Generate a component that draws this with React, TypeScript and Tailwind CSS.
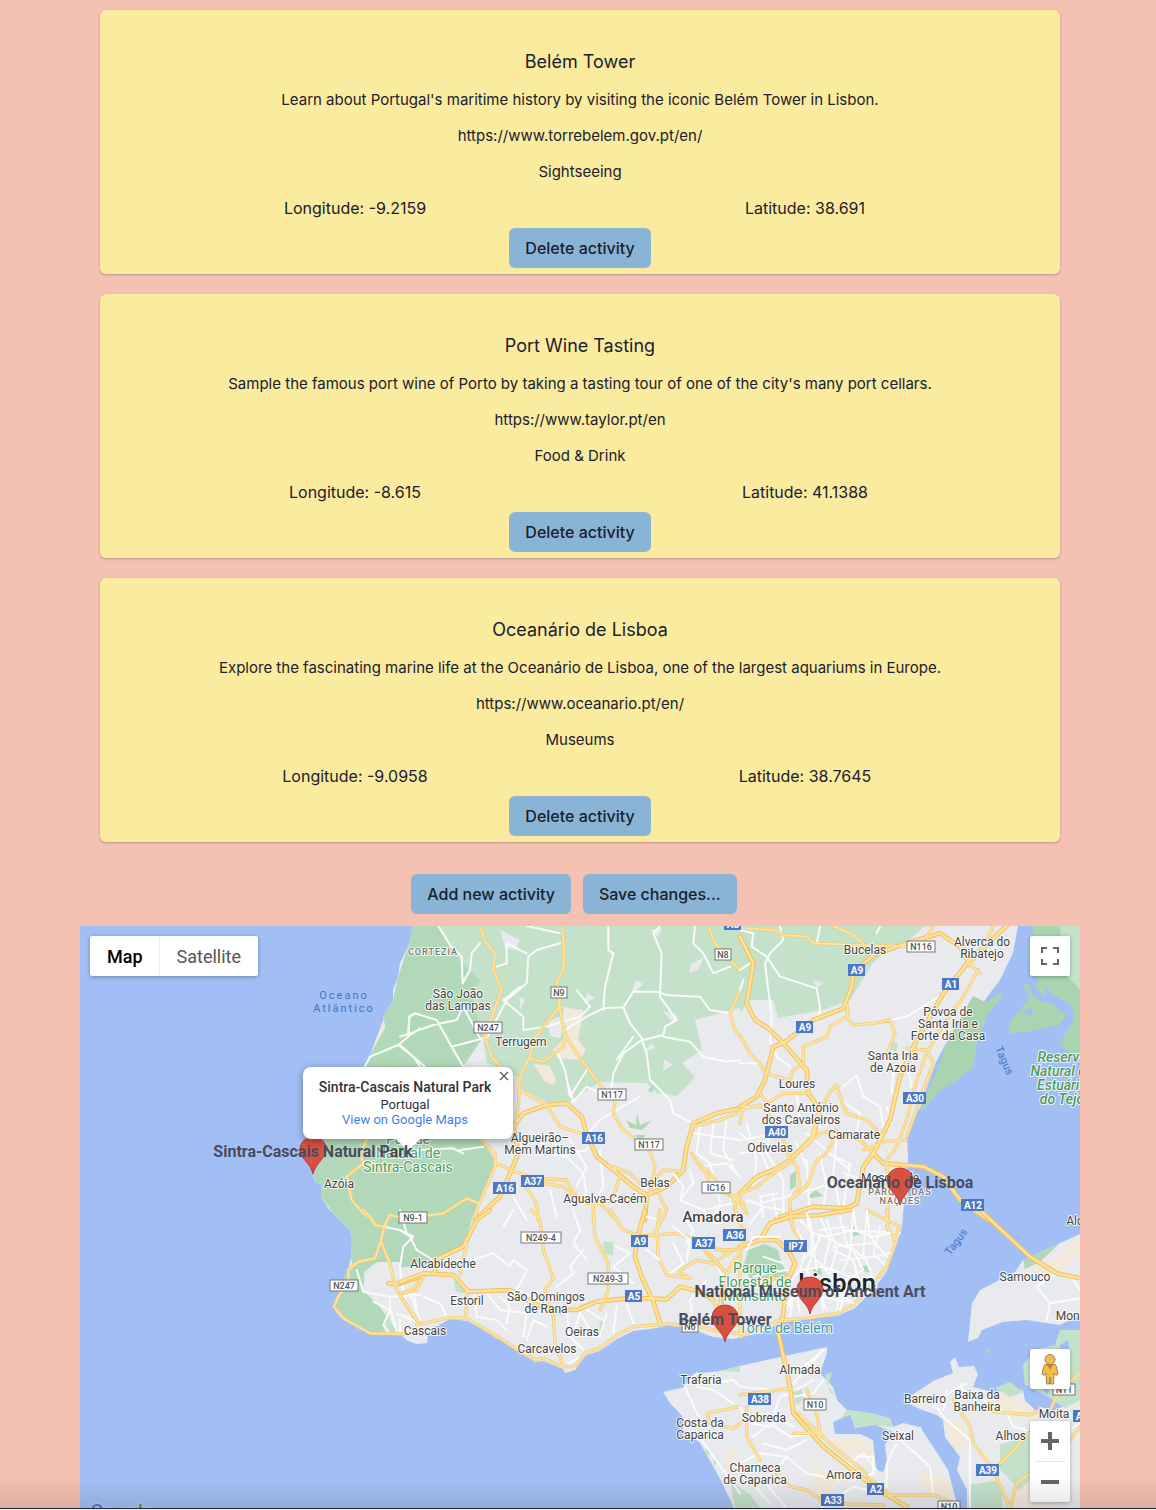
import React from "react";

type Activity = {
  name: string;
  description: string;
  url: string;
  category: string;
  longitude: string;
  latitude: string;
};

const activities: Activity[] = [
  {
    name: "Belém Tower",
    description: "Learn about Portugal's maritime history by visiting the iconic Belém Tower in Lisbon.",
    url: "https://www.torrebelem.gov.pt/en/",
    category: "Sightseeing",
    longitude: "-9.2159",
    latitude: "38.691",
  },
  {
    name: "Port Wine Tasting",
    description: "Sample the famous port wine of Porto by taking a tasting tour of one of the city's many port cellars.",
    url: "https://www.taylor.pt/en",
    category: "Food & Drink",
    longitude: "-8.615",
    latitude: "41.1388",
  },
  {
    name: "Oceanário de Lisboa",
    description: "Explore the fascinating marine life at the Oceanário de Lisboa, one of the largest aquariums in Europe.",
    url: "https://www.oceanario.pt/en/",
    category: "Museums",
    longitude: "-9.0958",
    latitude: "38.7645",
  },
];

function ActionButton({ children }: { children: React.ReactNode }) {
  return (
    <button type="button" className="h-10 rounded-md bg-[#8ab4d5] px-4 text-base font-medium text-[#1a202c]">
      {children}
    </button>
  );
}

function ActivityCard({ activity }: { activity: Activity }) {
  return (
    <article className="flex flex-col items-center rounded-md bg-[#fbeb9f] px-[30px] pt-[37px] pb-1.5 text-center text-[15px] leading-6 text-[#1a202c] shadow-[0_1px_3px_rgba(0,0,0,0.15),0_1px_2px_rgba(0,0,0,0.1)]">
      <h2 className="text-lg leading-[30px]">{activity.name}</h2>
      <p className="mt-[11px]">{activity.description}</p>
      <a href={activity.url} className="mt-3">{activity.url}</a>
      <p className="mt-3">{activity.category}</p>
      <div className="mt-3 mb-2 grid w-full grid-cols-2 text-base">
        <p>Longitude: {activity.longitude}</p>
        <p>Latitude: {activity.latitude}</p>
      </div>
      <ActionButton>Delete activity</ActionButton>
    </article>
  );
}

/* Map sheets: each is drawn on a grid three times finer than the map's own. */
type Sheet = { x: number; y: number; main: string; minor: string; wide: string };

const sheets: Sheet[] = [
  {
    x: 80,
    y: 920,
    wide: "",
    main: "M860 660L840 700 850 730 800 770 815 840 850 880 880 900",
    minor: "M1020 325L990 345 955 375 870 410 855 440M955 375L1000 410 1020 440M985 350L988 290 1005 280 1020 284",
  },
  {
    x: 400,
    y: 920,
    wide: "M225 900L300 830 330 760 355 700 340 620 370 580 440 555 500 550 545 590 560 640 590 710 640 750 700 800 740 825 800 800 850 750 860 680 880 610 950 580 1020 565M740 825L735 900",
    main: "M240 18L255 65 285 100 280 150 305 210 275 290 255 350 275 410 300 440M487 18L492 90 490 150 470 185 480 220 478 262 495 345 530 400 600 495 645 540 640 580 665 625 700 655M745 680L765 740 750 820M478 262L430 320 400 360 390 410 360 470 355 560 345 620M390 415L430 425 490 380 495 340M360 510L440 555 480 620 560 645M290 730L320 745 400 775 500 780 520 820 560 850 600 850 650 900M245 660L285 700 285 740 230 870 225 900M875 700L900 740 920 760 930 800 1000 830 1010 900M925 18L945 70 1020 150M1020 210L990 280 1005 330 1020 350M580 850L580 900M370 790L410 850 415 900M400 785L490 800 520 830M775 820L800 870 785 900M80 887L130 880 200 835 235 850M640 740L690 760 720 790M640 740L660 770 640 830M760 780L790 750 850 755M880 620L960 600 1010 580",
    minor: "M0 350L30 340 100 315 170 300 190 260 240 355M25 340L28 290 45 280 110 300 155 380 190 440M0 375L40 410 75 440M115 18L150 75 185 110 188 190M188 190L210 150 215 100 240 70M155 380L250 355M260 355L320 240 380 190 385 110 410 90 480 70M380 100L320 70 320 130 290 140M360 200L310 240 370 290 370 330 440 320 540 290 570 260 530 210M495 330L560 290 610 265 670 262 700 215 770 215 800 225 900 230 930 270 990 280M670 262L690 310 730 360 790 345 795 320 830 300 780 230 785 100 760 40 780 18M625 18L625 90 640 100 615 200 610 270M885 18L880 70 910 100 940 160 990 140M725 360L670 400 640 460 635 500M725 360L740 400 750 480 810 540 820 580 880 610M790 350L870 365 910 410 980 425 1020 420M470 390L495 450 510 530 560 450M500 480L520 545 560 500 600 520M510 660L540 710 560 740 530 800M520 700L560 690 590 640M560 645L600 600 650 570 720 530M900 620L890 700 930 730 960 850 940 900M940 610L930 700 1000 720M980 590L970 690 1010 760M440 700L500 710 550 760 560 830M600 690L610 800 580 850M450 810L470 890M340 830L380 900M0 710L60 690 160 685 190 700M180 690L250 680M700 350L650 420M880 640L1020 660M900 740L980 730 1020 770M380 18L480 40",
  },
  {
    x: 740,
    y: 920,
    wide: "M0 50L40 130 20 250 45 300 85 325 130 370M130 370L220 300 310 265 335 200 340 160 400 105 500 70 600 40 660 80 690 135M800 18L690 120 610 220 530 360 480 470 450 600 400 700 430 730 550 740 610 770 660 840 745 900M130 370L100 380 75 480 50 530 0 560M400 700L370 740 350 850 320 865 220 860 110 895M130 370L200 450 205 520 240 570 220 650 150 720 100 750 50 770 0 820",
    main: "M760 18L740 60 690 135 720 160M715 150L670 230 600 330 560 400 530 480 500 600 470 680 440 720M500 385L560 390 580 430 550 510 515 610 500 650M0 570L60 555 100 600 150 700M290 630L240 640 150 720M150 900L150 840 180 800 170 740 140 700M190 380L260 350 270 320 320 290 340 315 400 310 450 300 465 340 440 400M20 25L100 30 130 45 200 50 220 70 370 75 500 80M280 18L340 45 370 70M400 700L360 660 290 640 260 700 230 720 200 800 150 840M290 495L300 530 320 580 380 600 410 630M290 495L270 515 230 590 215 650M440 720L445 900M0 345L30 400 60 430 75 460 150 480 160 450 190 430 190 380M0 610L10 560 70 560M60 520L80 550 130 520 200 520M320 250L325 300M580 18L560 50M370 690L430 665 500 660M0 830L20 880",
    minor: "M40 40L35 80 80 110 120 170 230 205 240 260 235 300M120 20L130 60 90 100 75 130 95 290 90 360 110 410 150 440M240 20L230 70M605 225L500 290 450 300M200 720L210 900M240 700L260 800 250 860M290 650L280 760 300 870M0 640L60 690 90 760M20 610L50 720 40 800M90 620L80 700 130 780 130 880M300 540L360 580 350 640M310 500L350 465 370 530 420 560 430 620M0 430L60 430M310 760L410 790 440 770M60 850L140 830 280 790 350 790M170 670L200 740M0 700L60 690M0 660L120 640M200 640L330 750M10 180L0 210M0 150L30 130M40 40L0 30M260 700L330 730 310 860M70 890L60 830 110 820M440 560L455 610M460 450L455 520M500 430L515 500M410 40L420 20M170 520L180 610 240 620",
  },
  {
    x: 80,
    y: 1210,
    wide: "M925 220L955 222 1020 200",
    main: "M985 372L870 370 790 325 762 290 775 260 805 215 805 180 835 155 885 145 900 100 912 55M850 0L870 20 885 45 912 50 930 15 960 22M905 100L930 160 945 230 1000 320 1020 335M970 250L1000 235 1020 210",
    minor: "M912 50L960 60 1000 80 970 110 960 170 970 250M830 180L850 245 930 260 1020 255M930 260L930 290 950 365M880 275L930 300 910 345 925 365M970 250L990 310 980 370M1000 235L1010 300M950 310L1000 330M960 330L960 370",
  },
  {
    x: 400,
    y: 1210,
    wide: "M0 217L70 190 160 195 205 245 330 240 400 280 450 300 530 300 590 275 680 265 745 265 800 268 840 230 900 245 940 270M735 0L710 90 705 140 725 200 760 275 780 340M105 190L105 150 190 110 230 30 270 0",
    main: "M50 345L150 322 200 325 290 378 350 418 405 448 430 445 490 470 525 470 555 427 600 415 650 375 700 350 800 342 900 350 960 365 1020 370M180 195L200 100M200 245L198 320M395 0L420 30 430 120 460 205 435 240 460 320 465 400 490 470M580 0L585 80 625 160 625 240 600 300M630 0L670 60 720 78 830 70 880 85 940 150 980 190M780 0L770 60 775 140 800 195 870 205 835 185 890 150 940 160 1000 120M0 255L50 330M0 250L50 240 70 200M940 270L970 360M720 78L760 75 780 40M920 100L980 130 1020 110M930 640L920 610 1020 590M930 640L1000 655 1020 640",
    minor: "M0 60L30 80 50 120 100 150M220 150L280 130 330 170 340 150 380 180 350 240 420 270M220 240L230 320 290 330 320 360M470 230L520 190 510 170 550 120M340 0L310 50M520 0L540 60 520 100 560 150M500 300L510 380 560 430 505 460M530 290L570 360M650 110L690 130 640 170 700 220M650 290L640 370M680 280L700 340M880 340L870 270 920 210M820 100L850 160 810 190M740 20L780 30M0 0L20 70M260 250L300 300 380 310 370 380M380 390L400 330 440 350M540 310L520 370 600 380 620 310M560 300L610 330M855 530L900 630 960 690M890 530L940 540 1000 580M300 260L330 290 320 340M70 260L120 280 140 320M30 250L60 330M850 20L880 60 860 100M950 160L980 230M905 690L1020 850M855 530L890 490 940 520 1000 510 1020 530M960 270L970 300 1000 330",
  },
  {
    x: 740,
    y: 1210,
    wide: "M0 110L60 90 90 40 150 20 240 15 330 0M60 90L110 90 150 130 165 160 140 220 130 310 115 370 150 530 160 610 250 710 350 790 430 850 500 890M720 0L870 140 950 190 1020 205",
    main: "M0 380L120 330 200 325 290 310 340 285 400 220 440 170 470 90 440 50M150 0L160 60 190 100M380 0L480 50 460 90M440 0L445 60M0 555L150 535M20 590L20 680 60 750M110 790L150 830 200 840 260 880 430 885M200 540L230 610 240 670 160 670M175 610L280 710 380 790M640 570L690 650 700 700 760 780 810 895 830 820 900 770M760 780L840 700 890 640M760 605L870 615 900 600M1020 490L960 540 930 600M1020 650L990 690M450 855L580 855 640 880M0 130L0 380M70 210L150 200M380 800L500 895",
    minor: "M200 20L220 100 230 180M240 20L270 90 250 170 300 240 290 300M270 90L340 120 370 180 300 220M180 180L250 170 360 210 390 200M340 0L330 130 310 180M380 20L370 130 390 180M310 60L480 70M240 60L320 50M420 50L400 130 440 170M130 310L170 250 240 260 350 280M150 320L160 250M250 300L240 240 200 190M200 270L210 300M350 270L410 230M185 150L220 120M280 110L400 100M160 520L250 420 190 470 150 490M170 540L220 510M160 560L220 550 250 510M0 530L100 540M0 590L30 640 90 650 120 630 160 650M100 620L120 560 150 550M40 680L90 640 150 680 240 670M70 700L140 720 200 690M0 760L60 730 140 740 200 790 300 810M140 740L110 780M470 700L440 760 440 830M470 680L570 770 580 855M570 560L610 620 690 690 690 895M660 520L680 560 730 570 800 610 820 650 860 660M580 590L640 540 680 520M620 540L610 600M340 800L330 760 370 730 410 780M420 850L380 800M890 230L930 280 1020 265M930 280L920 330M1020 240L1000 210M890 230L950 190M20 800L90 880M70 810L140 895M240 895L340 830 420 850M350 740L400 740 400 790 340 810M940 690L1020 640",
  },
  {
    x: 640,
    y: 1160,
    wide: "",
    main: "M165 0L200 30 235 70 280 110 320 155M280 110L290 160 305 200 305 268 270 320 245 400 235 460 250 520M280 110L350 80 400 40 460 0M190 260L260 340M230 270L305 268",
    minor: "M100 40L130 80 120 120 190 150 280 130M150 30L160 70 120 120M190 150L230 190 300 180M330 190L370 140 430 150M400 110L410 170M320 120L370 140M480 180L520 220 560 230 640 210 700 230 750 220M500 160L520 220 510 280 560 330M560 180L590 270 570 340 610 420M600 170L620 250 680 300 700 360M640 150L650 210M470 210L500 260 480 330 440 380M540 230L500 330 530 400M450 400L520 390 600 400 640 430M600 300L700 290 750 280M580 270L640 300 660 380M680 150L690 230 740 290M20 270L60 300M320 270L340 230 420 230M100 200L150 240 140 300M440 430L470 400 480 460M540 400L560 450M620 380L600 450M340 350L380 340 440 330M370 290L430 310",
  },
];

type Shield = [string, number, number];
const motorways: Shield[] = [
  ["A8", 733, 924], ["A9", 857, 970], ["A1", 951, 984], ["A9", 805, 1027], ["A30", 915, 1098],
  ["A16", 594, 1138], ["A40", 777, 1132], ["A16", 505, 1188], ["A37", 533, 1181], ["A12", 973, 1205],
  ["A9", 640, 1241], ["A37", 704, 1243], ["A36", 735, 1235], ["IP7", 796, 1246], ["A5", 634, 1296],
  ["A38", 760, 1399], ["A39", 988, 1470], ["A2", 876, 1489], ["A33", 833, 1500], ["A3", 1082, 1416],
];
const roads: Shield[] = [
  ["N116", 921, 946], ["N8", 723, 954], ["N9", 559, 992], ["N247", 488, 1027], ["N117", 612, 1094],
  ["N117", 649, 1144], ["IC16", 716, 1187], ["N9-1", 413, 1217], ["N249-4", 541, 1237],
  ["N249-3", 608, 1278], ["N247", 344, 1285], ["N6", 690, 1326], ["N10", 815, 1404], ["N11", 1064, 1389],
  ["N10", 949, 1506],
];

type Place = [string, number, number];
const places: Place[] = [
  ["São João", 458, 998], ["das Lampas", 458, 1010], ["Terrugem", 521, 1046], ["Bucelas", 865, 954],
  ["Alverca do", 982, 946], ["Ribatejo", 982, 958], ["Póvoa de", 948, 1016], ["Santa Iria e", 948, 1028],
  ["Forte da Casa", 948, 1040], ["Santa Iria", 893, 1060], ["de Azoia", 893, 1072], ["Loures", 797, 1088],
  ["Santo António", 801, 1112], ["dos Cavaleiros", 801, 1124], ["Camarate", 854, 1139], ["Odivelas", 770, 1152],
  ["Algueirão–", 540, 1142], ["Mem Martins", 540, 1154], ["Belas", 655, 1187], ["Agualva-Cacém", 605, 1203],
  ["Azóia", 339, 1188], ["Alcabideche", 443, 1268], ["Estoril", 467, 1305], ["Cascais", 425, 1335],
  ["São Domingos", 546, 1301], ["de Rana", 546, 1313], ["Oeiras", 582, 1336], ["Carcavelos", 547, 1353],
  ["Trafaria", 701, 1384], ["Costa da", 700, 1427], ["Caparica", 700, 1439], ["Almada", 800, 1374],
  ["Sobreda", 764, 1422], ["Charneca", 755, 1472], ["de Caparica", 755, 1484], ["Amora", 844, 1479],
  ["Seixal", 898, 1440], ["Barreiro", 925, 1403], ["Baixa da", 977, 1399], ["Banheira", 977, 1411],
  ["Moita", 1054, 1418], ["Alhos Vedros", 1031, 1440], ["Samouco", 1025, 1281], ["Montijo", 1076, 1320],
  ["Alcochete", 1093, 1225], ["Moscavide", 890, 1182],
];

const pins = [
  { name: "Sintra-Cascais Natural Park", x: 313, y: 1174 },
  { name: "Oceanário de Lisboa", x: 900, y: 1205 },
  { name: "National Museum of Ancient Art", x: 810, y: 1314 },
  { name: "Belém Tower", x: 725, y: 1342 },
];

function InfoWindow() {
  return (
    <div className="relative h-[72px] w-[210px] rounded-lg bg-white pt-3 pr-1.5 text-center text-[13px] leading-[15px] text-[#333333] shadow-[0_2px_7px_1px_rgba(0,0,0,0.3)]">
      <p className="text-[14px] leading-4 font-medium">Sintra-Cascais Natural Park</p>
      <p className="mt-0.5">Portugal</p>
      <a href="https://maps.google.com/" className="block text-[#427fed]">View on Google Maps</a>
      <button type="button" aria-label="Close" className="absolute top-[3px] right-[3px] flex size-3 items-center justify-center">
        <svg viewBox="0 0 10 10" className="size-2.5" stroke="#555" strokeWidth="1.2">
          <path d="M1 1l8 8M9 1l-8 8" />
        </svg>
      </button>
    </div>
  );
}

function MapDrawing() {
  return (
    <svg
      viewBox="80 926 1000 582"
      preserveAspectRatio="xMidYMid slice"
      className="absolute inset-0 size-full"
      fontFamily="Roboto, sans-serif"
    >
      <title>Map of Lisbon and its surroundings</title>
      <rect x="80" y="926" width="1000" height="584" fill="#a2bff5" />

      {/* north bank */}
      <path
        fill="#e8eaed"
        d="M413 926L408 947 400 963 398 977 393 990 393 1000 383 1017 385 1020 378 1040 370 1057 361 1070 345 1100 335 1130 325 1140 325 1153 313 1175 315 1182 321 1184 321 1197 328 1208 335 1215 343 1223 350 1230 352 1240 351 1260 347 1277 337 1297 333 1307 337 1313 347 1322 360 1327 370 1334 400 1334 408 1341 417 1344 427 1343 428 1333 435 1327 450 1319 467 1321 480 1328 497 1339 507 1341 517 1351 535 1362 543 1361 563 1369 565 1373 575 1370 586 1355 600 1351 617 1339 633 1331 650 1329 667 1326 683 1327 700 1332 713 1337 733 1339 760 1333 780 1323 807 1319 837 1316 855 1308 873 1290 887 1271 897 1243 902 1227 904 1203 908 1160 907 1133 911 1120 920 1108 927 1087 937 1060 948 1040 973 1020 987 997 1000 980 1013 953 1018 926Z"
      />
      {/* farmland and parks */}
      <g fill="#c4e2ca">
        <path d="M438 926H740V1008L695 1020 702 1050 682 1063 695 1077 690 1083 677 1096 657 1093 647 1083 600 1082 567 1103 547 1102 523 1090 518 1077 487 1063 483 1037Z" />
        <path d="M740 926H925L907 942 887 950 873 963 850 1000 823 1010 778 1018 773 1000 750 1000 740 1013Z" />
      </g>
      <path
        fill="#b1d9b9"
        d="M413 926H438L462 963 480 980 472 997 483 1037 463 1067 482 1140 497 1163 475 1210 463 1247 433 1260 430 1267H400L392 1262H377L365 1272 363 1290 380 1307 397 1332H370L347 1322 333 1307 337 1297 351 1260 352 1240 350 1230 335 1215 321 1197 321 1184 315 1182 313 1175 325 1153 325 1140 345 1100 370 1057 385 1020 383 1017 393 1000 398 977 408 947Z"
      />
      <path fill="#e8eaed" d="M377 1262L400 1262V1267H430V1300L397 1332 387 1310 378 1302 365 1290 364 1272ZM500 930L520 940 515 950 505 948ZM650 930L662 928 658 937ZM690 965L704 957 698 970 690 973ZM636 980L643 984 630 997ZM588 993L595 998 583 1004ZM663 1011L677 1015 674 1024ZM652 1043L655 1048 642 1053ZM664 1059L673 1065 663 1071ZM548 1022L572 1010 560 1038 550 1036ZM520 997L525 1000 520 1010ZM813 980L823 983 817 988Z" />
      <path fill="#c4e2ca" d="M387 1310L394 1332H383ZM454 1279L460 1280 466 1294 455 1291ZM603 1242H613V1255L605 1254ZM600 1321H603V1334L599 1332ZM892 1040L898 1044 896 1052 891 1050Z" />
      <path fill="#f2e9da" d="M563 1007L583 1010 578 1040 586 1050 580 1060 558 1058 553 1050 567 1035ZM534 1064L550 1066 556 1080 553 1085 545 1082ZM384 1018L385 1028 370 1055ZM351 1258L353 1266 347 1275ZM898 1148L907 1142 908 1160Z" />
      <path fill="#b1d9b9" d="M748 1250L765 1244 778 1250 781 1262 788 1275 770 1282 750 1278 744 1265ZM720 1292L728 1286 722 1312 714 1322ZM808 1196L816 1190 823 1196 810 1198ZM852 1224L860 1235 852 1236ZM862 1266L870 1265 870 1273 861 1270ZM814 1254L818 1260 812 1259ZM790 1175L796 1171 796 1186 790 1190ZM812 1270L820 1266 822 1276ZM648 1090L655 1083 652 1093ZM626 1120L636 1125 637 1113 640 1125 652 1120 642 1130 630 1128ZM635 1135L646 1135 640 1142Z" />

      {/* estuary wetlands */}
      <path fill="#a9d4b0" d="M948 1040L973 996 987 1003 1000 992 1002 997 987 1015 977 1043 973 1067 953 1083 940 1090 921 1113 921 1107 937 1070ZM1028 926H1080V1060L1058 1043 1070 1018 1058 1000 1037 978 1028 960ZM1023 985L1043 980 1048 1000 1066 1015 1060 1025 1030 1031 1009 1034 1011 1020 1030 998Z" />
      <path fill="#a2bff5" d="M1025 1010L1032 1008 1033 1015 1018 1012Z" />
      <path fill="none" stroke="#a2bff5" strokeWidth="7" d="M1028 926Q1035 950 1032 975T1055 1000Q1075 1008 1069 1020L1055 1045" />
      <path fill="#c4e2ca" d="M1080 926H1060L1066 975 1080 990Z" />

      {/* eastern peninsula */}
      <path fill="#e8eaed" d="M1080 1234L1060 1243 1023 1260 1015 1272 980 1290 972 1303 968 1342 978 1338 982 1330 1003 1322 1027 1320 1060 1325 1080 1315Z" />
      <path fill="#f2e9da" d="M1080 1236L1050 1262 1020 1272 1035 1278 1060 1275 1080 1250Z" />
      <path fill="#b1d9b9" d="M1060 1243L1023 1260 1025 1269 1040 1262ZM985 1350L990 1349 986 1354Z" />

      {/* south bank */}
      <path
        fill="#e8eaed"
        d="M663 1392L685 1387 693 1374 720 1371 740 1366 780 1357 827 1347 827 1353 820 1373 833 1387 837 1400 847 1410 870 1413 890 1418 893 1427 903 1423 923 1428 922 1410 903 1401 933 1381 953 1373 950 1362 955 1357 959 1367 974 1366 978 1374 973 1387 993 1392 1023 1390 1027 1407 1047 1413 1080 1400V1508H734L717 1473 700 1443 683 1430 683 1417 670 1403Z"
      />
      <path fill="#f2e9da" d="M825 1440L860 1438 873 1447 875 1468 860 1455 840 1450ZM975 1392L1020 1400 1050 1410 1045 1420 1000 1415 985 1405ZM945 1418L965 1425 970 1450 950 1445ZM1015 1480L1035 1470 1060 1508H1010ZM810 1460L835 1480 830 1508 815 1495ZM725 1450L735 1447 733 1470 725 1465ZM920 1470L950 1480 955 1500 920 1490Z" />
      <path fill="#c4e2ca" d="M847 1410L870 1413 890 1418 893 1427 880 1426 850 1427 840 1420ZM1060 1330L1080 1330V1400L1065 1408 1045 1395 1025 1385 1023 1365 1035 1350 1055 1345ZM995 1388L1010 1382 1023 1392 1010 1397ZM693 1374L700 1372 705 1378 690 1383ZM720 1371L740 1366V1372ZM825 1375L832 1372 828 1385 835 1395 830 1393ZM1000 1445L1040 1430V1470L1020 1490 1000 1470ZM970 1485L1000 1480 1003 1508H968ZM730 1480L750 1495 760 1508H735ZM704 1448L712 1452 707 1457ZM713 1456L718 1462 714 1465ZM793 1392L802 1388 803 1400 796 1405Z" />
      <path fill="#a2bff5" d="M833 1422L850 1415 855 1428 875 1425 893 1432 885 1445 887 1463 883 1472 876 1470 873 1440 860 1434 835 1434ZM922 1410L937 1415 943 1420 945 1437 960 1457 957 1470 967 1490V1508H958L948 1470 932 1445 922 1430ZM1023 1390L1033 1400 1043 1412 1050 1420 1035 1410 1025 1400ZM1060 1345L1068 1340 1070 1355 1060 1358ZM1040 1385L1050 1388 1047 1395Z" />

      {/* streets and roads */}
      {sheets.map((s) => (
        <g
          key={`${s.x}-${s.y}`}
          transform={`translate(${s.x} ${s.y}) scale(${1 / 3})`}
          fill="none"
          strokeLinejoin="round"
          strokeLinecap="round"
        >
          <path d={s.minor} stroke="#fafbfb" strokeWidth="6" />
          <path d={s.main} stroke="#f5cd78" strokeWidth="10" />
          <path d={s.wide} stroke="#f3c05a" strokeWidth="14" />
          <path d={s.main} stroke="#fbe5a6" strokeWidth="5" />
          <path d={s.wide} stroke="#fce199" strokeWidth="8" />
        </g>
      ))}

      {roads.map(([t, x, y], i) => (
        <g key={i}>
          <rect x={x - t.length * 3 - 2} y={y - 5} width={t.length * 6 + 4} height="11" fill="#fff" stroke="#777" strokeWidth="1" />
          <text x={x} y={y + 4} textAnchor="middle" fontSize="9" fontWeight="500" fill="#555">{t}</text>
        </g>
      ))}
      {motorways.map(([t, x, y], i) => (
        <g key={i}>
          <rect x={x - t.length * 3 - 3} y={y - 6} width={t.length * 6 + 5} height="12" fill="#4b79c6" />
          <text x={x} y={y + 4} textAnchor="middle" fontSize="10" fontWeight="700" fill="#fff">{t}</text>
        </g>
      ))}

      <g
        textAnchor="middle"
        fontSize="12"
        fill="#444"
        stroke="#fff"
        strokeWidth="2"
        strokeOpacity="0.85"
        className="[paint-order:stroke] [stroke-linejoin:round]"
      >
        {places.map(([t, x, y]) => (
          <text key={`${t}-${x}`} x={x} y={y}>{t}</text>
        ))}
        <g fontWeight="500" fontSize="9" letterSpacing="1" fill="#777">
          <text x="433" y="955">CORTEZIA</text>
          <text x="900" y="1195">PARQUE DAS</text>
          <text x="900" y="1204">NAÇÕES</text>
        </g>
        <text x="713" y="1222" fontSize="15" fontWeight="500" fill="#444">Amadora</text>
        <text x="837" y="1292" fontSize="26" fontWeight="500" fill="#222">Lisbon</text>
        <g fontSize="14" fill="#4e9a61">
          <text x="408" y="1144">Parque</text>
          <text x="408" y="1158">Natural de</text>
          <text x="408" y="1172">Sintra-Cascais</text>
          <text x="755" y="1273">Parque</text>
          <text x="755" y="1287">Florestal de</text>
          <text x="755" y="1301">Monsanto</text>
        </g>
        <g fontSize="14" fontStyle="italic" fontWeight="500" fill="#4e9a61">
          <text x="1062" y="1062">Reserva</text>
          <text x="1062" y="1076">Natural do</text>
          <text x="1062" y="1090">Estuário</text>
          <text x="1062" y="1104">do Tejo</text>
        </g>
        <text x="786" y="1333" fontSize="14" fill="#4797a5">Torre de Belém</text>
      </g>
      <g textAnchor="middle" fontSize="11" fill="#4273c8">
        <text x="344" y="999" letterSpacing="2">Oceano</text>
        <text x="344" y="1012" letterSpacing="2">Atlântico</text>
        <text transform="translate(1001 1062) rotate(66)">Tagus</text>
        <text transform="translate(959 1244) rotate(-54)">Tagus</text>
      </g>

      {pins.map((p) => (
        <path
          key={p.name}
          transform={`translate(${p.x} ${p.y})`}
          d="M0 0C-2 -11 -13 -15 -13 -25A13 12 0 0 1 13 -25C13 -15 2 -11 0 0Z"
          fill="#d8503f"
          stroke="#b83d31"
          strokeWidth="1"
        />
      ))}
      <foreignObject x="303" y="1067" width="210" height="72" className="overflow-visible">
        <InfoWindow />
      </foreignObject>
      <path d="M395 1138H421L408 1151Z" fill="#fff" />
      {pins.map((p) => (
        <text key={p.name} x={p.x} y={p.y - 17} textAnchor="middle" fontSize="16" fontWeight="700" fill="#4b4b5c">
          {p.name}
        </text>
      ))}
    </svg>
  );
}

const control = "absolute right-2.5 flex size-10 items-center justify-center rounded-xs bg-white shadow-[0_1px_4px_rgba(0,0,0,0.3)]";

function MapPanel() {
  return (
    <section className="relative mt-3 h-[582px] overflow-hidden font-[Roboto,sans-serif]" aria-label="Activities map">
      <MapDrawing />

      <div className="absolute top-2.5 left-2.5 flex h-10 rounded-xs bg-white text-lg shadow-[0_1px_4px_rgba(0,0,0,0.3)]">
        <button type="button" className="border-r border-[#eeeeee] pt-0.5 pr-4 pl-[17px] font-medium text-black">Map</button>
        <button type="button" className="px-[17px] pt-0.5 text-[#565656]">Satellite</button>
      </div>

      <button type="button" aria-label="Toggle fullscreen view" className={`${control} top-2.5`}>
        <svg viewBox="0 0 18 18" className="size-[18px]" fill="#666">
          <path d="M0 0v6h2V2h4V0H0zm16 0h-4v2h4v4h2V0h-2zm0 16h-4v2h6v-6h-2v4zM2 12H0v6h6v-2H2v-4z" />
        </svg>
      </button>

      <button type="button" aria-label="Street View" className={`${control} bottom-[119px]`}>
        <svg viewBox="0 0 18 32" className="h-8 w-[18px]">
          <path d="M5 11.500C3 11.500 2.500 13 2.300 15L1 21 3 22.500 5 20 5.500 31H8.500L9 24 9.500 31H12.500L13 20 15 22.500 17 21 15.700 15C15.500 13 15 11.500 13 11.500Z" fill="#f6bb42" stroke="#8f8468" strokeWidth="1" />
          <path d="M5.500 11L9 17 12.500 11Z" fill="#d9743a" />
          <circle cx="9" cy="6.500" r="5" fill="#f6bb42" stroke="#8f8468" />
        </svg>
      </button>

      <div className="absolute right-2.5 bottom-1.5 flex w-10 flex-col items-center rounded-xs bg-white shadow-[0_1px_4px_rgba(0,0,0,0.3)]">
        <button type="button" aria-label="Zoom in" className="flex size-10 items-center justify-center">
          <svg viewBox="0 0 18 18" className="size-[18px]" fill="#666"><path d="M7 0h4v7h7v4h-7v7H7v-7H0V7h7z" /></svg>
        </button>
        <div className="h-px w-[30px] bg-[#e6e6e6]" />
        <button type="button" aria-label="Zoom out" className="flex size-10 items-center justify-center">
          <svg viewBox="0 0 18 18" className="size-[18px]" fill="#666"><path d="M0 7h18v4H0z" /></svg>
        </button>
      </div>

      <a
        href="https://maps.google.com/"
        aria-label="Google"
        className="absolute top-[572px] left-2.5 text-[20px] leading-7 font-medium [text-shadow:0_0_2px_white]"
      >
        <span className="text-[#4a7bd8]">G</span>
        <span className="text-[#d8503f]">o</span>
        <span className="text-[#f0b93a]">o</span>
        <span className="text-[#4a7bd8]">g</span>
        <span className="text-[#3d9a50]">l</span>
        <span className="text-[#d8503f]">e</span>
      </a>
    </section>
  );
}

export default function App() {
  return (
    <div className="relative bg-[#f5c1b3] font-[Inter,sans-serif]">
      <main className="pt-2.5 pr-[76px] pl-20">
        <div className="flex flex-col gap-5 px-5">
          {activities.map((a) => (
            <ActivityCard key={a.name} activity={a} />
          ))}
        </div>
        <div className="mt-8 flex justify-center gap-3 pr-3">
          <ActionButton>Add new activity</ActionButton>
          <ActionButton>Save changes...</ActionButton>
        </div>
        <MapPanel />
      </main>
      <div className="pointer-events-none absolute inset-x-0 bottom-0.5 h-8 bg-linear-to-b from-transparent to-black/10" />
      <div className="h-0.5 border-t border-[#252a38] bg-[#f0e4f2]" />
    </div>
  );
}
